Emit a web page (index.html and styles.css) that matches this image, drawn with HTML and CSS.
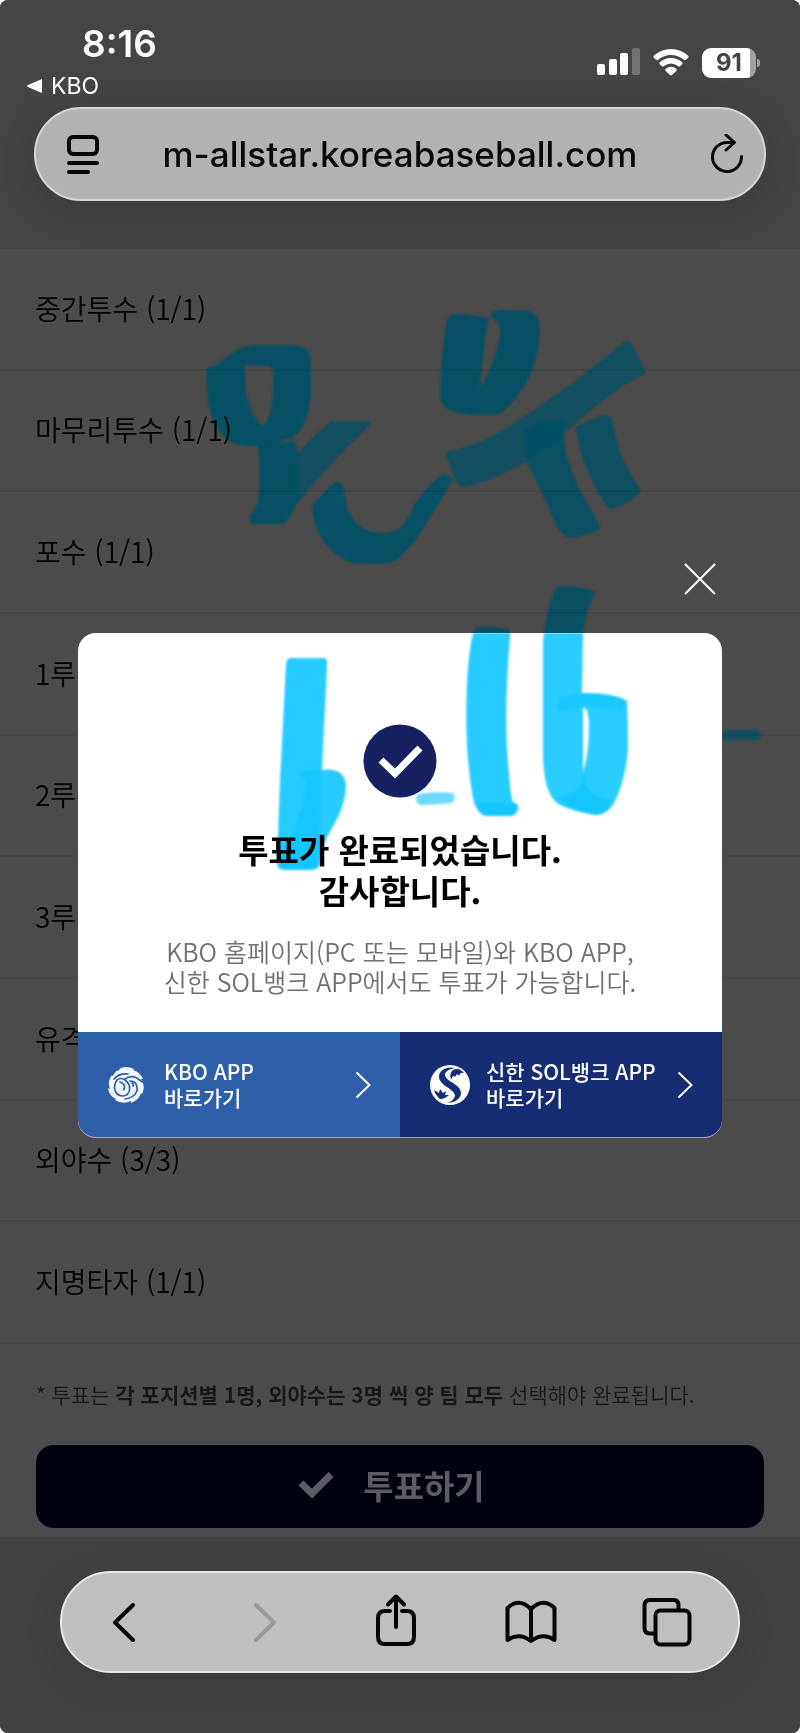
FILE: index.html
```html
<!DOCTYPE html>
<html lang="ko">
<head>
<meta charset="utf-8">
<meta name="viewport" content="width=device-width, initial-scale=1">
<title>KBO 올스타 투표</title>
<link rel="stylesheet" href="styles.css">
</head>
<body>
<svg class="defs" width="0" height="0" aria-hidden="true">
  <symbol id="ink-top" viewBox="0 0 800 1733" overflow="visible">
    <path fill-rule="evenodd" opacity=".9" d="M207 368C224 366 230 346 256 345L292 345Q311 346 311 362V392Q308 436 285 440Q266 447 248 446Q226 445 216 426Q205 406 207 368ZM245 365V386Q248 418 262 425Q268 425 271 408Q274 390 273 370Q272 365 263 366Z"/>
    <path opacity=".3" d="M207 368L245 365Q244 400 262 425Q280 426 303 400Q300 437 262 446Q226 448 213 418Q205 400 207 368Z"/>
    <path opacity=".9" d="M258 447L256 442H294Q298 445 298 456L300 480Q300 496 293 511Q287 524 281 524H254Q248 522 251 514Q259 504 259 490Q260 468 258 447Z"/>
    <path opacity=".75" d="M298 453Q318 431 332 421H369Q375 422 366 429Q330 462 297 504L288 480Z"/>
    <path opacity=".92" d="M312 505L334 483Q342 479 344 490Q347 532 382 533Q402 534 411 512Q424 486 444 474L453 479Q438 505 424 527Q405 556 392 562Q383 565 352 563Q314 547 312 505Z"/>
    <path opacity=".9" d="M451 315Q465 313 488 318Q484 345 480 388Q496 363 500 334Q502 323 490 316Q493 310 502 310L530 311Q540 315 540 331Q539 359 525 385Q505 415 494 415Q454 416 445 407Q440 403 440 393Q441 354 447 320Z"/>
    <path opacity=".75" d="M445 452Q481 446 522 418Q574 384 624 342Q631 339 633 346L646 373Q636 378 620 388Q584 414 565 433Q523 471 469 486Q460 489 456 481Q449 466 445 452Z"/>
    <path opacity=".85" d="M524 430Q540 416 563 422Q562 451 579 489L600 526Q600 533 570 538Q560 536 553 518Q541 488 528 465Q523 450 524 430Z"/>
    <path opacity=".8" d="M576 426L603 415Q610 413 613 424L618 446Q623 464 641 490Q640 498 612 509Q607 509 602 499Q577 455 576 426Z"/>
  </symbol>
  <symbol id="ink-date" viewBox="0 0 800 1733" overflow="visible">
    <path opacity=".88" d="M290 658H324Q328 659 327 665L322 770Q344 767 346 785Q346 805 332 828Q321 846 320 863Q318 870 309 870H283Q277 869 277 862L280 782L286 665Q286 659 290 658Z"/>
    <path opacity=".5" d="M295 772Q303 769 321 770V782L320 864Q319 870 311 870H283Q277 868 278 858Q302 825 307 780Z"/>
    <path opacity=".35" d="M280 845L279 863Q281 869 309 869Q318 868 319 846Z"/>
    <path opacity=".88" d="M475 628Q491 625 508 629Q511 631 510 638Q503 717 509 773Q511 800 513 802Q520 804 518 810Q516 816 510 816H485Q476 813 473 798Q464 748 467 685Q469 642 475 628Z"/>
    <path opacity=".5" d="M478 803Q495 801 516 804Q519 813 508 815H486Q479 811 478 803Z"/>
    <path fill-rule="evenodd" opacity=".86" d="M557 587Q575 584 596 592Q587 607 583 631L582 693Q616 693 627 701Q628 720 628 748Q626 778 616 799Q610 814 596 815Q574 812 560 805Q543 796 543 752V642Q547 603 557 587ZM583 708V772Q589 755 589 724Q588 706 583 708Z"/>
    <path opacity=".5" d="M556 704Q562 694 584 693Q613 693 626 701L622 710Q600 708 586 707L559 712Z"/>
    <path opacity=".6" d="M556 797Q576 798 584 777Q588 798 611 799Q606 814 596 815Q573 812 556 797Z"/>
    <path opacity=".6" d="M418 794Q435 791 453 793Q457 797 452 803Q435 805 420 805Q413 801 418 794Z"/>
    <path opacity=".75" d="M724 730H757Q763 732 759 740H722Z"/>
  </symbol>
</svg>

<div class="screen">
  <header class="chrome-top">
    <div class="status">
      <div class="status-left">
        <span class="time">8:16</span>
        <a class="back-app" href="#"><svg width="16" height="16" viewBox="0 0 16 16"><path d="M15 1V15L1 9Q-1 8 1 7Z" fill="currentColor"/></svg>KBO</a>
      </div>
      <div class="status-right">
        <svg width="43" height="28" viewBox="0 0 43 28" fill="#fff"><rect x="0" y="16" width="8" height="11" rx="2"/><rect x="12" y="11" width="8" height="16" rx="2"/><rect x="23" y="5" width="8" height="22" rx="2"/><rect x="35" y="0" width="8" height="27" rx="2" opacity=".25"/></svg>
        <svg width="36" height="28" viewBox="0 0 36 28" fill="#fff"><path d="M0.600 8Q8 1 18 1T35.400 8Q36 9 35 10L32.500 12Q31.500 12.500 30.500 11.500Q25 7 18 7T5.500 11.500Q4.500 12.500 3.500 12L1 10Q0 9 .6 8Z"/><path d="M6.600 14.500Q11 10 18 10T29.400 14.500Q30 15.500 29 16.500L27 18.200Q26 19 24.800 18Q22 15.500 18 15.500T11.200 18Q10 19 9 18.200L7 16.500Q6 15.500 6.600 14.500Z"/><path d="M12.500 21Q18 16.500 23.500 21Q24.200 22 23.400 23L19 27Q18 27.800 17 27L12.600 23Q11.800 22 12.500 21Z"/></svg>
        <span class="battery"><span class="battery-level">91</span></span>
      </div>
    </div>
    <div class="url-bar">
      <button class="icon-btn" aria-label="페이지 메뉴"><svg width="34" height="40" viewBox="0 0 34 40" fill="none" stroke="#080808" stroke-width="4" stroke-linecap="round"><rect x="3" y="3" width="28" height="17" rx="4"/><path d="M3 29H31M3 38H22"/></svg></button>
      <span class="url">m-allstar.koreabaseball.com</span>
      <button class="icon-btn" aria-label="새로 고침"><svg width="34" height="40" viewBox="0 0 34 40" fill="none" stroke="#080808" stroke-width="3" stroke-linecap="round" stroke-linejoin="round"><path d="M31.500 22.500A14.500 14.500 0 1 1 17 8.500H24M16 1L24.500 8.500L16 16"/></svg></button>
    </div>
  </header>

  <main class="page">
    <svg class="ink ink-page" viewBox="0 0 800 1733" aria-hidden="true"><use href="#ink-top"/><use href="#ink-date"/></svg>
    <ul class="positions">
      <li>중간투수 (1/1)</li>
      <li>마무리투수 (1/1)</li>
      <li>포수 (1/1)</li>
      <li>1루수 (1/1)</li>
      <li>2루수 (1/1)</li>
      <li>3루수 (1/1)</li>
      <li>유격수 (1/1)</li>
      <li>외야수 (3/3)</li>
      <li>지명타자 (1/1)</li>
    </ul>
    <p class="note">* 투표는 <strong>각 포지션별 1명, 외야수는 3명 씩 양 팀 모두</strong> 선택해야 완료됩니다.</p>
    <button class="vote"><svg width="34" height="28" viewBox="0 0 34 28" fill="none" stroke="currentColor" stroke-width="7"><path d="M2 12L13 22.500L32 3.500"/></svg>투표하기</button>
  </main>

  <nav class="chrome-bottom">
    <div class="toolbar">
      <button class="tool" aria-label="뒤로"><svg width="52" height="56" viewBox="0 0 52 56"><path d="M35 11L17 28.500L35 46"/></svg></button>
      <button class="tool tool-off" aria-label="앞으로" disabled><svg width="52" height="56" viewBox="0 0 52 56"><path d="M22 11L40 28.500L22 46"/></svg></button>
      <button class="tool" aria-label="공유"><svg width="52" height="56" viewBox="0 0 52 56"><path d="M20 17H15Q8 17 8 24V43Q8 50 15 50H37Q44 50 44 43V24Q44 17 37 17H32M26 33V3M18 10.500L26 2.500L34 10.500"/></svg></button>
      <button class="tool" aria-label="책갈피"><svg width="52" height="56" viewBox="0 0 52 56"><path d="M26 15Q14 3 2.500 14V46Q14 38 26 47Q38 38 49.500 46V14Q38 3 26 15ZM26 15V47"/></svg></button>
      <button class="tool" aria-label="탭"><svg width="52" height="56" viewBox="0 0 52 56"><rect x="14.500" y="16.500" width="34" height="34" rx="5"/><path d="M37.500 15V11Q37.500 6 32.500 6H9Q3.500 6 3.500 11.500V34Q3.500 39.500 9 39.500H13"/></svg></button>
    </div>
  </nav>

  <div class="modal">
    <button class="close" aria-label="닫기"><svg width="32" height="32" viewBox="0 0 32 32" fill="none" stroke="#fff" stroke-width="2"><path d="M1 1L31 31M31 1L1 31"/></svg></button>
    <section class="dialog" role="dialog" aria-labelledby="done-title">
      <div class="dialog-body">
        <svg class="badge" width="74" height="74" viewBox="0 0 74 74"><circle cx="37" cy="37" r="36.500" fill="#172161"/><path d="M18 36L32 49.500L57 24" fill="none" stroke="#fff" stroke-width="7"/></svg>
        <h1 id="done-title">투표가 완료되었습니다.<br>감사합니다.</h1>
        <p class="desc">KBO 홈페이지(PC 또는 모바일)와 KBO APP,<br>신한 SOL뱅크 APP에서도 투표가 가능합니다.</p>
        <svg class="ink ink-dialog" viewBox="78 633 644 399" aria-hidden="true"><use href="#ink-date" width="800" height="1733"/></svg>
      </div>
      <div class="links">
        <a class="link link-kbo" href="#">
          <svg class="logo" width="40" height="40" viewBox="0 0 40 40"><path d="M13 4Q20 0 28 4L27 5Q34 7 37 14L35 14Q40 22 36 29L35 28Q33 35 25 38L25 36Q17 40 9 35L10 34Q3 31 2 23L4 24Q1 16 6 10L7 11Q9 5 14 5Z" fill="#f1f8ff"/><path d="M14 13C8 19 9 29 16 29C23 29 25 21 18 15Q17 13 14 13Z" fill="#f1f8ff"/><g fill="none" stroke="#2d60a8" stroke-width="1.700" stroke-linecap="round"><path d="M11 15C6 22 9 31 17 31C25 30 26 20 19 15Q15 12 11 15"/><path d="M14 17Q20 19 18 25"/><path d="M19 14Q27 8 36 17"/><path d="M24 16Q32 16 31 26Q28 33 19 34M27 21Q28 19 26 18"/><path d="M8 14Q13 8 22 9"/></g></svg>
          <span>KBO APP<br>바로가기</span>
          <svg class="chev" width="16" height="28" viewBox="0 0 16 28"><path d="M1.500 1.500L14.500 14L1.500 26.500"/></svg>
        </a>
        <a class="link link-sol" href="#">
          <svg class="logo" width="40" height="40" viewBox="0 0 40 40"><circle cx="20" cy="20" r="20" fill="#fff"/><path d="M25 3C17 1 9 5 9 12C9 20 24 24 25 30C25 34 21 37 17 38C24 38 31 34 31 28C31 19 16 17 15 10C15 6 20 4 25 3Z" fill="#162c73"/><path d="M34 8Q29 2 23 5Q19 8 21 15Q23 9 25 12Q27 7 29 11Q30 7 34 8ZM4 25L9 28L10 24L13 28L16 26L15 30L19 30Q15 34 10 34Q6 31 4 25Z" fill="#162c73"/></svg>
          <span>신한 SOL뱅크 APP<br>바로가기</span>
          <svg class="chev" width="16" height="28" viewBox="0 0 16 28"><path d="M1.500 1.500L14.500 14L1.500 26.500"/></svg>
        </a>
      </div>
    </section>
  </div>
</div>
</body>
</html>
```

FILE: styles.css
```css
* { box-sizing: border-box; }

body {
  margin: 0;
  background: #fff;
  font-family: "Noto Sans CJK KR", "Noto Sans", sans-serif;
}

button {
  margin: 0;
  padding: 0;
  border: 0;
  background: none;
  font: inherit;
  color: inherit;
}

a { color: inherit; text-decoration: none; }
svg { display: block; flex: none; }
.defs { position: absolute; }

.screen {
  position: relative;
  overflow: hidden;
  border-radius: 8px;
  background: #4c4c4c;
}

/* browser chrome, top */
.chrome-top {
  height: 249px;
  padding: 0 34px;
  background: #454545;
  font-family: Inter, "Noto Sans", sans-serif;
}

.status {
  display: flex;
  justify-content: space-between;
  height: 107px;
  color: #fff;
}

.status-left { padding-top: 22px; }

.time {
  display: block;
  margin-left: 48px;
  font-size: 37px;
  font-weight: 600;
  line-height: 44px;
}

.back-app {
  display: flex;
  align-items: center;
  gap: 8px;
  margin-left: -7px;
  font-size: 23px;
  line-height: 40px;
}

.status-right {
  display: flex;
  align-items: flex-start;
  gap: 13px;
  padding: 48px 10px 0 0;
}

.battery {
  position: relative;
  width: 54px;
  height: 30px;
  border-radius: 9px;
  background: linear-gradient(90deg, #fff 48px, #a0a0a0 48px);
}

.battery::after {
  content: "";
  position: absolute;
  right: -4px;
  top: 11px;
  width: 3px;
  height: 8px;
  border-radius: 0 3px 3px 0;
  background: #a0a0a0;
}

.battery-level {
  display: block;
  text-align: center;
  font-size: 24px;
  font-weight: 700;
  line-height: 30px;
  color: #454545;
}

.url-bar {
  display: flex;
  align-items: center;
  height: 94px;
  padding: 0 20px 0 30px;
  border: 2px solid #d6d6d6;
  border-radius: 47px;
  background: #b2b2b2;
  box-shadow: 0 8px 36px rgba(0, 0, 0, .14);
}

.icon-btn { width: 34px; height: 40px; }

.url {
  flex: 1;
  margin-right: 10px;
  text-align: center;
  font-size: 35px;
  font-weight: 500;
  color: #080808;
}

/* page under the dialog */
.page { padding-bottom: 9px; }

.positions {
  position: relative;
  display: grid;
  grid-auto-rows: 1fr;
  min-height: 1095px;
  margin: 0;
  padding: 0;
  list-style: none;
}

.positions li {
  display: flex;
  align-items: center;
  padding: 0 35px 2px;
  border-bottom: 2px solid rgba(0, 0, 0, .08);
  font-size: 28px;
  font-weight: 350;
  color: #000;
}

.note {
  position: relative;
  margin: 0;
  padding: 34px 36px 0;
  font-size: 21px;
  font-weight: 350;
  line-height: 32px;
  color: #181818;
}

.note strong { font-weight: 700; }

.vote {
  display: flex;
  align-items: center;
  justify-content: center;
  gap: 30px;
  width: calc(100% - 72px);
  height: 83px;
  margin: 35px 36px 0;
  padding: 0 16px 4px 0;
  border-radius: 18px;
  background: #000210;
  font-size: 33px;
  font-weight: 700;
  color: #5c5c64;
}

/* highlighter strokes */
.ink {
  position: absolute;
  filter: blur(1px);
}

.ink-page {
  top: 0;
  left: 50%;
  width: 800px;
  height: 1733px;
  margin-left: -400px;
  fill: #005167;
}

.ink-dialog {
  top: 0;
  left: 50%;
  width: 644px;
  height: 399px;
  margin-left: -322px;
  fill: #08c4ff;
  mix-blend-mode: multiply;
}

/* browser chrome, bottom */
.chrome-bottom {
  padding: 34px 60px 60px;
  background: #434343;
}

.toolbar {
  display: flex;
  align-items: center;
  justify-content: space-between;
  height: 102px;
  padding: 0 45px 0 36px;
  border: 2px solid #e8e8e8;
  border-radius: 51px;
  background: #bfbfbf;
  box-shadow: 0 8px 36px rgba(0, 0, 0, .14);
}

.tool {
  width: 52px;
  height: 56px;
  fill: none;
  stroke: #050505;
  stroke-width: 4;
  stroke-linecap: round;
  stroke-linejoin: round;
}

.tool-off { stroke: #999; }

/* dialog */
.modal {
  position: absolute;
  inset: 0;
  display: flex;
  flex-direction: column;
  padding: 563px 78px 0;
}

.close {
  align-self: flex-end;
  width: 32px;
  height: 32px;
  margin: 0 6px 38px 0;
}

.dialog {
  overflow: hidden;
  border-bottom: 1px solid #9aa5bd;
  border-radius: 18px;
  background: #fff;
}

.dialog-body {
  position: relative;
  display: flex;
  flex-direction: column;
  align-items: center;
  height: 399px;
  padding-top: 91px;
  text-align: center;
}

.dialog h1 {
  margin: 31px 0 0;
  font-size: 33px;
  font-weight: 700;
  line-height: 41px;
  color: #000;
}

.desc {
  margin: 25px 0 0;
  font-size: 25px;
  font-weight: 350;
  line-height: 30px;
  color: #707070;
}

.links {
  display: grid;
  grid-template-columns: 1fr 1fr;
}

.link {
  display: flex;
  align-items: center;
  height: 105px;
  padding: 0 29px 0 28px;
  font-size: 21px;
  font-weight: 500;
  line-height: 26px;
  color: #fff;
}

.link span {
  margin: 0 auto 0 18px;
  padding-bottom: 2px;
  white-space: nowrap;
}

.link-kbo { background: #2d60a8; }
.link-sol { padding-left: 30px; background: #162c73; }
.link-sol span { margin-left: 16px; }

.chev {
  fill: none;
  stroke: currentColor;
  stroke-width: 2;
}
```
